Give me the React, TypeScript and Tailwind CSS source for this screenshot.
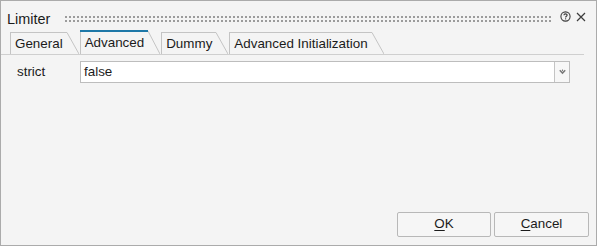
import React from 'react'

const font = { fontFamily: '"Liberation Sans", Arial, sans-serif' }

interface TabProps {
  label: string
  active?: boolean
}

const Tab: React.FC<TabProps> = ({ label, active }) => {
  const h = active ? 24 : 22
  return (
    <div className="flex items-end">
      <div
        className={
          active
            ? 'h-[24px] border-l border-[#c4c4c4] pl-[4px] pr-[4px] flex items-center relative bg-[#f4f4f4]'
            : 'h-[22px] border-l border-t border-[#c4c4c4] pl-[4px] pr-[4px] flex items-center'
        }
      >
        {active && <div className="absolute -left-px top-0 right-0 h-[2px] bg-[#1e78a8]" />}
        <span className="text-[13.4px] leading-none text-[#1b1b1b] pt-[1px]">{label}</span>
      </div>
      <svg width="12" height={h} className="block">
        <line x1="0" y1={active ? 1 : 0.5} x2="12" y2={h} stroke="#c4c4c4" strokeWidth="1" />
      </svg>
    </div>
  )
}

const Grip: React.FC = () => (
  <svg className="flex-1 h-[6px] block" height="6">
    <defs>
      <pattern id="grip" width="4" height="4" patternUnits="userSpaceOnUse">
        <rect x="0" y="0" width="2" height="2" fill="#9c9c9c" />
      </pattern>
    </defs>
    <rect x="0" y="0" width="100%" height="6" fill="url(#grip)" />
  </svg>
)

export default function App() {
  return (
    <div
      className="w-[597px] h-[246px] border border-[#ababab] bg-[#f4f4f4] flex flex-col text-[#1b1b1b]"
      style={font}
    >
      {/* Title bar */}
      <div className="h-[29px] flex items-center pl-[6px] pr-[10px] pt-[5px]">
        <span className="text-[14.4px] leading-none pt-[2px]">Limiter</span>
        <div className="flex-1 flex items-center ml-[15px] mr-[7px] pt-[1px]">
          <Grip />
        </div>
        <svg width="11" height="11" viewBox="0 0 11 11" className="block -mt-[3px]">
          <circle cx="5.5" cy="5.5" r="4.6" fill="none" stroke="#3c3c3c" strokeWidth="1.1" />
          <path d="M3.9 4.3 C3.9 3.2 4.6 2.9 5.5 2.9 C6.4 2.9 7.1 3.4 7.1 4.2 C7.1 5.2 5.6 5.3 5.6 6.4" fill="none" stroke="#3c3c3c" strokeWidth="1.1" />
          <rect x="5.05" y="7.3" width="1.1" height="1.1" fill="#3c3c3c" />
        </svg>
        <svg width="10" height="10" viewBox="0 0 10 10" className="block ml-[5px] -mt-[3px]">
          <path d="M1 1 L9 9 M9 1 L1 9" stroke="#3c3c3c" strokeWidth="1.2" />
        </svg>
      </div>

      {/* Tabs */}
      <div className="flex items-end gap-[1px] pl-[9px] mr-[12px] h-[25px] border-b border-[#cfcfcf]">
        <Tab label="General" />
        <Tab label="Advanced" active />
        <Tab label="Dummy" />
        <Tab label="Advanced Initialization" />
      </div>

      {/* Content */}
      <div className="flex items-center pt-[6px] pl-[16px] pr-[26px]">
        <span className="w-[63px] text-[13.4px]">strict</span>
        <div className="flex-1 h-[22px] border border-[#bdbdbd] bg-white flex">
          <div className="flex-1 flex items-center pl-[3px] text-[13.4px]">false</div>
          <div className="w-[15px] border-l border-[#c4c4c4] bg-[#f7f7f7] flex items-center justify-center">
            <svg width="7" height="6" viewBox="0 0 7 6" className="block">
              <path d="M0.8 1.2 L3.5 4 L6.2 1.2" fill="none" stroke="#7a7a7a" strokeWidth="1.6" />
              <rect x="3" y="0.5" width="1" height="1.5" fill="#7a7a7a" />
            </svg>
          </div>
        </div>
      </div>

      <div className="flex-1" />

      {/* Buttons */}
      <div className="flex justify-end gap-[3px] pr-[7px] pb-[8px]">
        <button className="w-[94px] h-[25px] border border-[#b8b8b8] rounded-[2px] bg-[#f6f6f6] text-[13.4px]">
          <span className="underline underline-offset-2">O</span>K
        </button>
        <button className="w-[95px] h-[25px] border border-[#b8b8b8] rounded-[2px] bg-[#f6f6f6] text-[13.4px]">
          <span className="underline underline-offset-2">C</span>ancel
        </button>
      </div>
    </div>
  )
}
